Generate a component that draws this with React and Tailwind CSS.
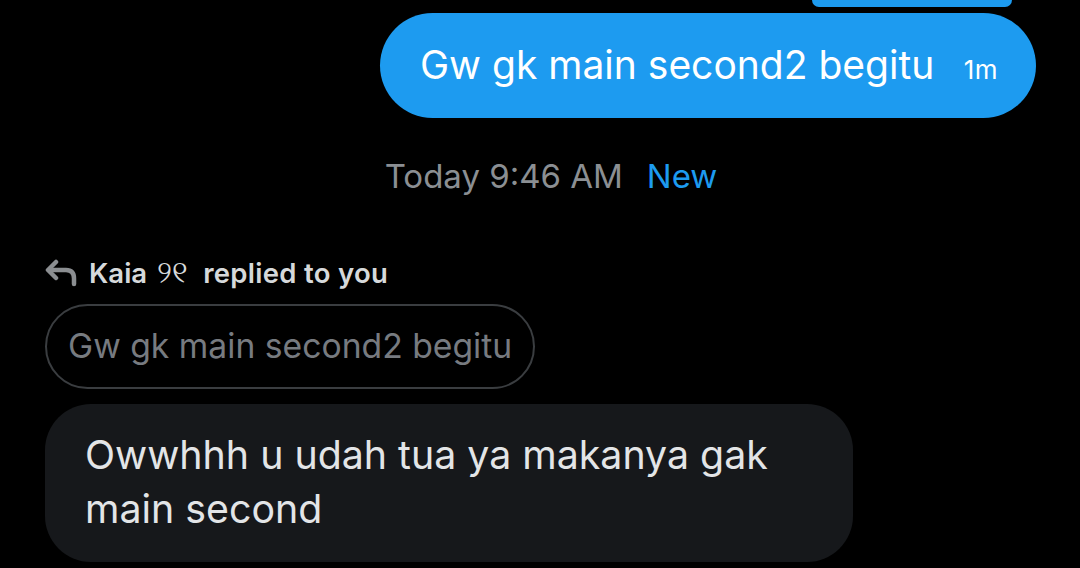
import React from 'react';

const font = { fontFamily: "Inter, Roboto, 'Noto Sans', sans-serif" };

const ReplyIcon = () => (
  <svg width="34" height="28" viewBox="0 0 34 28" fill="none" className="text-[#8b8e91]">
    <path d="M11 3 L3 11 L11 19" stroke="currentColor" strokeWidth="4.5" strokeLinecap="round" strokeLinejoin="round" />
    <path d="M4 11 H21 C26.5 11 29 14 29 19.5 V25" stroke="currentColor" strokeWidth="4.5" strokeLinecap="round" />
  </svg>
);

export default function App() {
  return (
    <div className="w-[1080px] h-[568px] bg-black overflow-hidden" style={font}>
      {/* previous outgoing bubble, cut off at the top */}
      <div className="flex justify-end pr-[68px]">
        <div className="w-[200px] h-[7px] bg-[#1d9bf0] rounded-b-full" />
      </div>

      {/* outgoing */}
      <div className="flex justify-end pr-[44px] mt-[6px]">
        <div className="h-[105px] w-[656px] rounded-full bg-[#1d9bf0] flex items-center pl-[40px] pr-[38px]">
          <span className="text-[39px] text-white whitespace-nowrap">Gw gk main second2 begitu</span>
          <span className="ml-auto text-[26px] tracking-[0.5px] text-white mt-[8px]">1m</span>
        </div>
      </div>

      {/* timestamp */}
      <div className="flex justify-center gap-[24px] mt-[38px] text-[33px] leading-[40px] pl-[22px]">
        <span className="text-[#8b8f93]">Today 9:46 AM</span>
        <span className="text-[#1d9bf0]">New</span>
      </div>

      {/* reply header */}
      <div className="flex items-center gap-[10px] pl-[45px] mt-[62px]">
        <ReplyIcon />
        <div className="flex items-center text-[27.5px] font-semibold text-[#d6d9db] leading-[30px]">
          <span>Kaia</span>
          <span className="ml-[10px] mr-[15px] text-[30px] font-normal -mt-[4px]">୨୧</span>
          <span className="tracking-[0.3px]">replied to you</span>
        </div>
      </div>

      {/* quoted */}
      <div className="pl-[45px] mt-[16px]">
        <div className="inline-flex items-center h-[85px] px-[21px] rounded-full border-2 border-[#3a3d40]">
          <span className="text-[33.7px] text-[#777b80]">Gw gk main second2 begitu</span>
        </div>
      </div>

      {/* incoming */}
      <div className="pl-[45px] mt-[15px]">
        <div className="w-[808px] h-[158px] rounded-[46px] bg-[#16181b] pl-[40px] pr-[40px] pt-[24px]">
          <p className="text-[39.3px] leading-[54px] text-[#e3e5e7]">Owwhhh u udah tua ya makanya gak main second</p>
        </div>
      </div>
    </div>
  );
}
